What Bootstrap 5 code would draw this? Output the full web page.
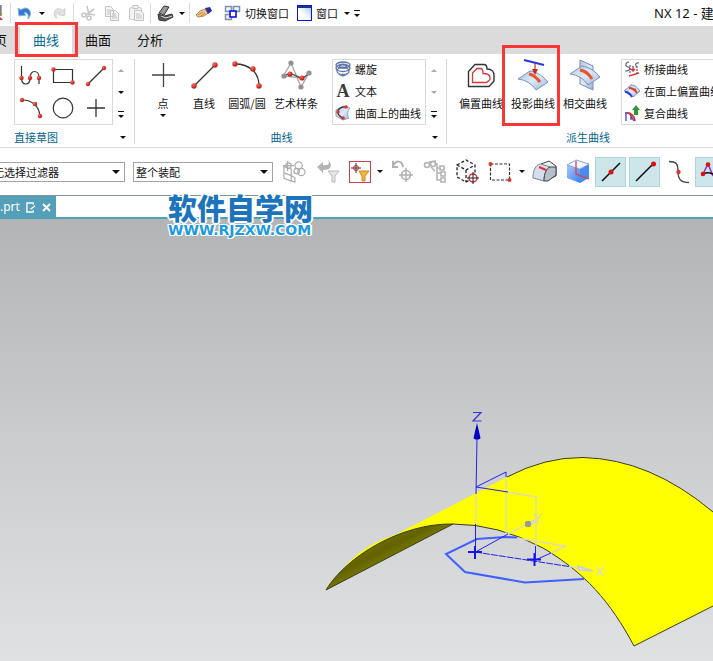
<!DOCTYPE html>
<html lang="zh-CN">
<head>
<meta charset="utf-8">
<meta name="viewport" content="width=device-width, initial-scale=1">
<title>NX 12 - 建模</title>
<link href="https://cdn.jsdelivr.net/npm/bootstrap@5.3.0/dist/css/bootstrap.min.css" rel="stylesheet">
<style>
body{font-family:"Noto Sans","Noto Sans CJK SC",sans-serif;font-size:11px;line-height:14px;color:#111;background:#fff}
.app{height:100vh;overflow:hidden}
button{background:none;border:0;padding:0;color:inherit;white-space:nowrap}
svg{display:block;flex:none;overflow:visible}
.cjk{font-family:"Noto Sans CJK SC",sans-serif}
.titlebar{height:26px}
.tool{width:24px;height:24px;display:flex;align-items:center;justify-content:center;flex:none}
.drop{width:10px;height:24px;display:flex;align-items:center;justify-content:center;flex:none}
.caret{display:block;width:0;height:0;border:3px solid transparent;border-top:3px solid #111;border-bottom:0}
.caret.up{border-top:0;border-bottom:3px solid #aaa}
.caret.dim{border-top-color:#aaa}
.caret.big{border-width:4px 4px 0}
.more{border-top:1px solid #111;padding-top:3px}
.vline{width:1px;height:20px;background:#ddd;margin:0 2px;flex:none}
.apptitle{font:13px/18px "Noto Sans","Noto Sans CJK SC",sans-serif;width:59px}
.tabbar{height:28px;background:#dbdbdb;font-size:13px;line-height:18px;padding-left:20px}
.tabbar button{width:52px;height:28px}
.tabbar button.first{width:20px;margin-left:-20px;text-align:left;overflow:hidden;direction:rtl;padding-right:13px}
.tabbar button.on{background:#fff;color:#006a92}
.ring{position:absolute;border:3px solid #fc3535;pointer-events:none;z-index:3}
.ring.r1{inset:-4px -6px -3px -5px}
.ring.r2{inset:-14px -1px -1px -5px}
.ribbon{height:94px;border-bottom:1px solid #d9d9d9;padding-top:5px}
.group{height:85px;border-right:1px solid #d9d9d9;flex:none}
.g1{width:135px;padding-left:14px}
.g2{width:312px;padding-left:8px}
.g3{width:282px;padding-left:8px;border:0}
.glabel{color:#00648a;height:14px}
.gshift{padding-right:12px}
.box{border:1px solid #d9d9d9;height:66px;flex:none}
.gallery{width:99px;display:grid;grid-template-columns:repeat(3,1fr);grid-template-rows:1fr 1fr}
.gallery button{display:flex;align-items:center;justify-content:center}
.scroll{width:16px;height:66px;flex:none}
.scroll button{height:22px;width:16px;display:flex;flex-direction:column;align-items:center;justify-content:center}
.big{height:66px;flex:none;position:relative;display:flex;flex-direction:column;align-items:center}
.big svg{margin-bottom:5px}
.w40{width:40px}.w42{width:42px}.w44{width:44px}.w54{width:54px}.w52{width:52px}
.listbox{width:94px;display:flex;flex-direction:column;justify-content:center}
.listbox.wide{width:150px;margin-left:10px}
.listbox button{height:22px;margin-top:-1px;margin-bottom:1px;display:flex;align-items:center;gap:4px;padding-left:2px;flex:none}
.selbar{height:47px}
.pick{position:relative;flex:none}
.pick select{appearance:none;-webkit-appearance:none;width:140px;height:20px;border:1px solid #a5a5a5;border-radius:0;background:#fff;padding:0 2px;font-size:11px;line-height:14px;color:#111;display:block}
.pick .caret{position:absolute;right:5px;top:8px;pointer-events:none}
.pick.cut{margin-left:-15px}
.pick.cut select{padding-left:7px}
.sb{width:34px;height:30px;display:flex;align-items:center;justify-content:center;flex:none}
.sb.narrow{width:32px}
.on2{width:31px;background:#cde6ea;border:1px solid #a9d5de;margin-right:3px}
.hot{width:22px;height:22px;border:1px solid #cf3f4a;display:flex;align-items:center;justify-content:center;flex:none}
.docrow{border-top:1px solid #7f9299;border-bottom:2px solid #4fa0b9;height:24px}
.doctab{background:#549fb9;color:#fff;width:56px;height:22px;font-size:12px;gap:6px}
.stage{background:linear-gradient(#b3b4b6,#cbccce 50%,#e0e1e3)}
.wm{position:absolute;left:168px;top:192px;z-index:4;pointer-events:none;white-space:nowrap;color:#1c75bc}
.wm .cn{font:900 29px/31px "Noto Sans CJK SC",sans-serif;text-shadow:1px 1px #fff,-1px -1px #fff,1px -1px #fff,-1px 1px #fff,2px 0 #fff,-2px 0 #fff,0 2px #fff}
.wm .en{font:bold 14px/14px "DejaVu Sans",sans-serif;color:#1b9be0;text-shadow:1px 1px #fff,-1px -1px #fff,1px -1px #fff,-1px 1px #fff,2px 0 #fff}
</style>
</head>
<body>
<svg width="0" height="0" class="position-absolute" aria-hidden="true"><defs>
<radialGradient id="rd" cx=".35" cy=".3"><stop offset="0" stop-color="#f0766c"/><stop offset="1" stop-color="#c8271e"/></radialGradient>
<linearGradient id="sf" x2="1" y2="1"><stop offset="0" stop-color="#a9c2e2"/><stop offset=".5" stop-color="#e0eaf6"/><stop offset="1" stop-color="#94b2da"/></linearGradient>
<linearGradient id="dk" x1="0" y1="0" x2="1" y2="1"><stop offset=".2" stop-color="#848400"/><stop offset=".42" stop-color="#626200"/><stop offset=".62" stop-color="#8e8e00"/></linearGradient>
<linearGradient id="bl" x2="1" y2="1"><stop offset="0" stop-color="#a5c8ff"/><stop offset="1" stop-color="#3f80ee"/></linearGradient>
<linearGradient id="wn" x1="1" y1="0" x2="0" y2="1"><stop offset="0" stop-color="#9cc4ee"/><stop offset=".6" stop-color="#fff"/></linearGradient>
</defs></svg>
<div class="app d-flex flex-column position-relative">
<header class="titlebar d-flex align-items-center cjk">
  <svg width="8" height="18" viewBox="0 0 8 18"><path d="M0 1h1v9H0z" fill="#8aa8dc"/><path d="M0 6l2 5-2 1z" fill="#f2a72e"/><path d="M0 13l3 3H0z" fill="#df2b2b"/><path d="M1 1v11" stroke="#555"/></svg>
  <span class="vline"></span>
  <button class="tool" aria-label="撤销"><svg width="16" height="16" viewBox="0 0 16 16"><path d="M1 3l1 8 7-1-2-2c3-1 5 1 4 6 4-4 3-10-2-11-2 0-4 1-5 2z" fill="#3878c7" stroke="#7eb2ec"/></svg></button>
  <button class="drop" aria-label="撤销列表"><span class="caret"></span></button>
  <button class="tool" aria-label="重做"><svg width="14" height="14" viewBox="0 0 16 16"><path d="M15 3l-1 8-7-1 2-2c-3-1-5 1-4 6-4-4-3-10 2-11 2 0 4 1 5 2z" fill="#e2e2e2" stroke="#c8c8c8"/></svg></button>
  <span class="vline"></span>
  <button class="tool" aria-label="剪切"><svg width="15" height="15" viewBox="0 0 15 15" fill="none" stroke="#c6c6c6" stroke-width="1.6"><path d="M6 0l2 9M13 3L5 9M8 8l6 1"/><circle cx="3" cy="9" r="2"/><circle cx="8" cy="12" r="2"/></svg></button>
  <button class="tool" aria-label="复制"><svg width="14" height="15" viewBox="0 0 14 15" fill="#f4f4f4" stroke="#c2c2c2"><path d="M.5 .5h5l3 3v7h-8zM5.500 4.500h5l3 3v7h-8zM2 4h3M2 6h3M2 8h3M7 8h4M7 10h5M7 12h5"/></svg></button>
  <button class="tool" aria-label="粘贴"><svg width="15" height="16" viewBox="0 0 15 16" fill="#f4f4f4" stroke="#c2c2c2"><rect x=".5" y="2.500" width="12" height="12" rx="2"/><path d="M4 .5h5v3H4zM5.500 5.500h6l3 3v7h-9zM7 9h4M7 11h6M7 13h6"/></svg></button>
  <span class="vline"></span>
  <button class="tool" aria-label="显示"><svg width="17" height="17" viewBox="0 0 17 17"><path d="M2 8L7 1l5 1-5 8z" fill="#999" stroke="#333"/><path d="M1 9l6 2 8-2 1 3-8 4-6-1z" fill="#555" stroke="#333"/><path d="M4 11l5 2 6-2" stroke="#ddd" fill="none"/></svg></button>
  <button class="drop" aria-label="显示列表"><span class="caret"></span></button>
  <span class="vline"></span>
  <button class="tool" aria-label="重复命令"><svg width="16" height="12" viewBox="0 0 16 12"><path d="M0 8l4-4 5-2 3 4-4 3-6 1z" fill="#f3c68c" stroke="#a96f32" stroke-width=".8"/><path d="M2 8l5-3M5 9l4-3" stroke="#a96f32" stroke-width=".8"/><path d="M9 1l5-1 2 4-4 3z" fill="#2a2f9c"/></svg></button>
  <button class="d-flex align-items-center gap-1 ms-2"><svg width="17" height="17" viewBox="0 0 17 17" fill="#eef2f6" stroke="#7e93a8"><path d="M1.500 1.500h6v5h-6zM9.500 1.500h6v5h-6zM1.500 9.500h6v5h-6z" stroke-width="1.500"/><rect x="6" y="6" width="6" height="6" fill="#fff" stroke="#0000f0" stroke-width="1.500"/></svg><span>切换窗口</span></button>
  <button class="d-flex align-items-center gap-1 ms-2"><svg width="15" height="16" viewBox="0 0 15 16"><rect x=".5" y=".5" width="14" height="15" fill="url(#wn)" stroke="#1010ee"/><path d="M1 1h13v2H1z" fill="#153c77"/></svg><span>窗口</span></button>
  <button class="drop ms-1" aria-label="窗口列表"><span class="caret"></span></button>
  <button class="drop" aria-label="更多"><span class="more"><span class="caret"></span></span></button>
  <div class="apptitle ms-auto text-nowrap overflow-hidden">NX 12 - 建模</div>
</header>

<nav class="tabbar d-flex cjk">
  <button class="first">主页</button>
  <button class="on position-relative">曲线<span class="ring r1"></span></button>
  <button>曲面</button>
  <button>分析</button>
</nav>

<section class="ribbon d-flex cjk">
  <div class="group g1 d-flex flex-column">
    <div class="d-flex">
      <div class="box gallery">
        <button aria-label="轮廓"><svg width="22" height="22" viewBox="0 0 22 22"><path d="M1.500 1v12c0 8 8.500 8 8.500 0 0-9 9-8 9-1v7" fill="none" stroke="#333" stroke-width="1.200"/><g fill="url(#rd)"><circle cx="1.500" cy="13" r="2.200"/><circle cx="10" cy="13" r="2.200"/><circle cx="19" cy="13" r="2.200"/></g></svg></button>
        <button aria-label="矩形"><svg width="22" height="18" viewBox="0 0 22 18"><path d="M1.500 2.500h19v13h-19z" fill="none" stroke="#333" stroke-width="1.200"/><g fill="url(#rd)"><circle cx="1.500" cy="2.500" r="2.200"/><circle cx="20.500" cy="15.500" r="2.200"/></g></svg></button>
        <button aria-label="直线"><svg width="20" height="20" viewBox="0 0 20 20"><path d="M2 18L18 2" stroke="#333" stroke-width="1.200"/><g fill="url(#rd)"><circle cx="2" cy="18" r="2.200"/><circle cx="18" cy="2" r="2.200"/></g></svg></button>
        <button aria-label="圆弧"><svg width="22" height="22" viewBox="0 0 22 22"><path d="M2 3c10 0 17 6 18 16" fill="none" stroke="#333" stroke-width="1.200"/><g fill="url(#rd)"><circle cx="2" cy="3" r="2.200"/><circle cx="15" cy="7" r="2.200"/><circle cx="20" cy="19" r="2.200"/></g></svg></button>
        <button aria-label="圆"><svg width="22" height="22" viewBox="0 0 22 22"><circle cx="11" cy="11" r="9.800" fill="none" stroke="#333" stroke-width="1.200"/></svg></button>
        <button aria-label="点"><svg width="18" height="18" viewBox="0 0 18 18"><path d="M9 0v18M0 9h18" stroke="#333" stroke-width="1.300"/></svg></button>
      </div>
      <div class="scroll"><button aria-label="向上"><span class="caret up"></span></button><button aria-label="向下"><span class="caret"></span></button><button aria-label="更多"><span class="more"><span class="caret"></span></span></button></div>
    </div>
    <div class="glabel d-flex align-items-center justify-content-between mt-auto pe-2"><span>直接草图</span><span class="caret"></span></div>
  </div>

  <div class="group g2 d-flex flex-column">
    <div class="d-flex">
      <button class="big w40"><svg width="32" height="32" viewBox="0 0 32 32"><path d="M16.500 4v24M5 16h23" stroke="#444" stroke-width="1.300"/></svg><span>点</span><span class="caret mt-1"></span></button>
      <button class="big w42"><svg width="32" height="32" viewBox="0 0 32 32"><path d="M6 27L27 6" stroke="#333" stroke-width="1.300"/><g fill="url(#rd)"><circle cx="6" cy="27" r="2.700"/><circle cx="27" cy="6" r="2.700"/></g></svg><span>直线</span></button>
      <button class="big w44"><svg width="32" height="32" viewBox="0 0 32 32"><path d="M4 5c14 0 24 8 24 22" fill="none" stroke="#333" stroke-width="1.300"/><g fill="url(#rd)"><circle cx="4" cy="5" r="2.700"/><circle cx="22" cy="10" r="2.700"/><circle cx="28" cy="27" r="2.700"/></g></svg><span>圆弧/圆</span></button>
      <button class="big w54"><svg width="32" height="32" viewBox="0 0 32 32"><path d="M4 16l7-12 10 24 8-14M4 17l18 2" fill="none" stroke="#aaa" stroke-width="1.400"/><path d="M4 17c8-5 10 0 17 2 4 0 6-3 8-5" fill="none" stroke="#555" stroke-width="1.400"/><g fill="#919191"><circle cx="4" cy="17" r="2.600"/><circle cx="11" cy="4" r="2.600"/><circle cx="21" cy="28" r="2.600"/><circle cx="29" cy="14" r="2.600"/></g><g fill="url(#rd)"><circle cx="10" cy="15" r="2.600"/><circle cx="22" cy="19" r="2.600"/></g></svg><span>艺术样条</span></button>
      <div class="box listbox ms-auto">
        <button><svg width="16" height="16" viewBox="0 0 16 16" fill="none" stroke="#5c74a8" stroke-width="1.300"><ellipse cx="8" cy="4" rx="7" ry="3" fill="#dfe7f5"/><ellipse cx="8" cy="7" rx="7" ry="3.500"/><ellipse cx="8" cy="10" rx="6" ry="3.500"/><ellipse cx="8" cy="5" rx="3.500" ry="1.500"/><path d="M4 13c2 3 7 2 9-1"/></svg>螺旋</button>
        <button><svg width="16" height="16" viewBox="0 0 16 16" aria-hidden="true"><text x="8" y="14" text-anchor="middle" font-family="Liberation Serif,serif" font-weight="bold" font-size="18" fill="#3c3c3c">A</text></svg>文本</button>
        <button><svg width="16" height="16" viewBox="0 0 16 16"><path d="M1 5l7-4 7 2c-3 3-3 8-1 10l-6 2-7-4z" fill="url(#sf)" stroke="#86a2cc"/><path d="M11 2c-5-1-9 3-8 6 0 3 3 3 5 6" fill="none" stroke="#333" stroke-width="1.300"/><g fill="#df352a"><circle cx="11" cy="2" r="1.800"/><circle cx="3" cy="7" r="1.800"/><circle cx="8" cy="13" r="1.800"/></g></svg>曲面上的曲线</button>
      </div>
      <div class="scroll me-1"><button aria-label="向上"><span class="caret up"></span></button><button aria-label="向下"><span class="caret dim"></span></button><button aria-label="更多"><span class="more"><span class="caret"></span></span></button></div>
    </div>
    <div class="glabel d-flex align-items-center mt-auto pe-2"><span class="flex-fill text-center gshift">曲线</span><span class="caret"></span></div>
  </div>

  <div class="group g3 d-flex flex-column">
    <div class="d-flex">
      <button class="big w52"><svg width="32" height="32" viewBox="0 0 32 32" fill="none"><path d="M3.500 27.500V12.500L10 5.500h9q3 0 3 4.500c6 0 7 3 7 7v5l-5 5.500z" stroke="#333" stroke-width="1.400"/><path d="M7.500 23.500V14l4.500-4.500h3.500q2.500 0 2.500 5c5 0 7 2 7 4v2l-3.500 3z" stroke="#d93636" stroke-width="1.300"/></svg><span>偏置曲线</span></button>
      <button class="big w52"><svg width="32" height="32" viewBox="0 0 32 32"><path d="M1 20l12-8c7 1 13 5 18 11l-12 8c-4-6-10-10-18-11z" fill="url(#sf)" stroke="#7890b4"/><path d="M12 15c5 1 8 4 11 8" fill="none" stroke="#e4552c" stroke-width="3"/><path d="M7 1l20 5" stroke="#2a35e8" stroke-width="2"/><path d="M18 4v7" stroke="#c8271e" stroke-width="1.200"/><path d="M15 10h6l-3 6z" fill="#c8271e"/></svg><span>投影曲线</span><span class="ring r2"></span></button>
      <button class="big w52"><svg width="32" height="32" viewBox="0 0 32 32"><path d="M11 1l13 6v24l-13-6z" fill="url(#sf)" stroke="#7890b4"/><path d="M1 15l12-8c7 1 13 5 18 11l-12 8c-4-6-10-10-18-11z" fill="url(#sf)" fill-opacity=".9" stroke="#7890b4"/><path d="M11 11c6 1 9 4 12 9" fill="none" stroke="#e4552c" stroke-width="3"/></svg><span>相交曲线</span></button>
      <div class="box listbox wide">
        <button><svg width="16" height="16" viewBox="0 0 16 16" fill="none"><path d="M5 1C1 1 1 6 4 6s3 4-3 4M15 2c-4-1-4 3-2 4" stroke="#666" stroke-width="1.200"/><path d="M6 4v8M13 5v8" stroke="#33c" stroke-dasharray="2 1"/><path d="M5 15l10-3M9 5v5M7 8l2 2 2-2" stroke="#dc3c30" stroke-width="1.500"/></svg>桥接曲线</button>
        <button><svg width="16" height="14" viewBox="0 0 16 14"><path d="M0 7l7-6c4 0 7 3 9 6l-7 6c-2-4-5-6-9-6z" fill="url(#sf)" stroke="#7890b4"/><path d="M1 8c3 0 5 2 7 5" fill="none" stroke="#33e" stroke-width="1.800"/><path d="M5 4c4 0 6 2 8 5M9 6l3-1" fill="none" stroke="#dc3c30" stroke-width="1.800"/></svg>在面上偏置曲线</button>
        <button><svg width="16" height="16" viewBox="0 0 16 16" fill="none"><path d="M2 7v9M1 8h4l5 8M7 9v6" stroke="#33c" stroke-width="1.200"/><path d="M3 8c5 0 7 3 8 8" stroke="#dc3c30" stroke-width="1.800"/><path d="M12 0l4 5h-2v5h-4V5H8z" fill="#2b9b3a"/></svg>复合曲线</button>
      </div>
    </div>
    <div class="glabel d-flex align-items-center mt-auto pe-2"><span class="flex-fill text-center">派生曲线</span></div>
  </div>
</section>

<section class="selbar d-flex align-items-center cjk">
  <div class="pick cut"><select aria-label="选择过滤器"><option>无选择过滤器</option></select><span class="caret big"></span></div>
  <div class="pick ms-2"><select aria-label="选择范围"><option>整个装配</option></select><span class="caret big"></span></div>
  <button class="sb ms-1" aria-label="组件链接"><svg width="24" height="22" viewBox="0 0 26 24" fill="none" stroke="#adadad" stroke-width="1.300"><path d="M2 6l8 3v13l-8-3zM2 13l8 3M10 16l4 2v5l-4-1M6 0v11M1 5h12"/><circle cx="7" cy="5" r="3"/><circle cx="18" cy="5" r="4"/><circle cx="21" cy="12" r="4"/><circle cx="16" cy="11" r="3"/></svg></button>
  <button class="sb" aria-label="重置过滤器"><svg width="24" height="24" viewBox="0 0 24 24"><path d="M1 7l6-5v3c6 1 7-2 5-5 6 5 2 11-5 10v3z" fill="#b5b5b5"/><path d="M12 11h11l-4 5v6h-3v-6z" fill="#e5e5e5" stroke="#bbb"/></svg></button>
  <button class="hot ms-1" aria-label="常规选择过滤器"><svg width="20" height="20" viewBox="0 0 20 20"><path d="M6 1v10M1 6h10" stroke="#333"/><circle cx="6" cy="6" r="2.500" fill="none" stroke="#c8271e"/><path d="M9 9h10l-4 5v5h-3v-5z" fill="#f5b638" stroke="#c88a1c"/></svg></button>
  <button class="drop ms-1" aria-label="过滤器列表"><span class="caret"></span></button>
  <button class="sb" aria-label="定位"><svg width="23" height="23" viewBox="0 0 23 23" fill="none" stroke="#b0b0b0" stroke-width="1.500"><path d="M2 6c3-6 9-6 10 1M2 1v6h5" stroke-width="2"/><circle cx="15" cy="15" r="4.500"/><path d="M15 8v14M8 15h14"/></svg></button>
  <button class="sb narrow" aria-label="装配导航"><svg width="24" height="24" viewBox="0 0 24 24" fill="none" stroke="#b4b4b4" stroke-width="1.600"><circle cx="4" cy="5" r="2.500"/><circle cx="10" cy="4" r="2.500"/><path d="M6 2l7-1M14 3v17h4M14 13h4M14 8h4M8 7l4 4"/><path d="M17 6h4v4h-4zM18 12h4v4h-4zM18 18h4v4h-4z"/></svg></button>
  <button class="sb narrow" aria-label="小平面体"><svg width="24" height="24" viewBox="0 0 24 24" fill="none"><path d="M2 5l9-5 9 5v12l-9 5-9-5zM2 5l9 5 9-5M11 10v12" stroke="#222" stroke-width="1.300" stroke-dasharray="3 2"/><circle cx="18" cy="18" r="4" fill="#fff" stroke="#d32a2a" stroke-width="1.400"/><path d="M18 12v12M12 18h12" stroke="#222"/></svg></button>
  <button class="sb" aria-label="矩形选择"><svg width="22" height="20" viewBox="0 0 22 20"><path d="M1.500 2h19v16h-19z" fill="none" stroke="#333" stroke-width="1.200" stroke-dasharray="3 1.500"/><circle cx="1.500" cy="2" r="2" fill="#df352a"/><circle cx="20.500" cy="18" r="2" fill="#df352a"/></svg></button>
  <button class="drop" aria-label="选择方式"><span class="caret"></span></button>
  <button class="sb" aria-label="着色"><svg width="25" height="22" viewBox="0 0 25 22"><path d="M9 3l8-3 7 5v10l-9 4z" fill="#f0f0f0" stroke="#444"/><path d="M1 14C2 7 5 3 9 3l9 3c-4 2-6 7-6 14L1 17z" fill="#d5deee" stroke="#7a8498"/><path d="M12 20c0-8 3-13 6-14l6 0v8l-8 6z" fill="#b9bfca" stroke="#444"/><path d="M7 6l7 3" stroke="#ee2b2b" stroke-width="2"/></svg></button>
  <button class="sb" aria-label="透视"><svg width="24" height="24" viewBox="0 0 24 24"><path d="M1 5l13 4v14L1 18z" fill="url(#bl)"/><path d="M14 9l9-5v14l-9 5z" fill="#4a8af0"/><path d="M1 5l9-5 13 4-9 5z" fill="#f2f6ff" stroke="#8aa6d8"/><path d="M10 1v13l13 5" fill="none" stroke="#dc4040" stroke-width="1.300"/></svg></button>
  <button class="sb on2" aria-label="中点"><svg width="20" height="20" viewBox="0 0 20 20"><path d="M1 19L19 1" stroke="#111" stroke-width="1.600"/><circle cx="10" cy="10" r="2.500" fill="#d11"/></svg></button>
  <button class="sb on2" aria-label="端点"><svg width="20" height="20" viewBox="0 0 20 20"><path d="M1 19L18 2" stroke="#111" stroke-width="1.600"/><circle cx="18.500" cy="2" r="2.500" fill="#d11"/></svg></button>
  <button class="sb narrow" aria-label="拐点"><svg width="20" height="22" viewBox="0 0 20 22"><path d="M0 .5c7 0 9 2 9 10s3 11 11 11" fill="none" stroke="#444" stroke-width="1.300"/><circle cx="9.500" cy="11" r="2.200" fill="#df352a"/></svg></button>
  <button class="sb on2" aria-label="极点"><svg width="20" height="20" viewBox="0 0 20 20" fill="none"><path d="M2 12l5-10 5 12" stroke="#93c" stroke-width="1.600"/><path d="M2 12c6-3 10 0 14 2" stroke="#111" stroke-width="1.500"/><circle cx="2" cy="12" r="2.300" fill="#d11"/><circle cx="7" cy="2.500" r="2.300" fill="#d11"/></svg></button>
</section>

<div class="docrow flex-shrink-0 d-flex">
  <button class="doctab d-flex align-items-center"><span>.prt</span><svg width="10" height="11" viewBox="0 0 11 12" fill="none" stroke="#fff" stroke-width="1.500"><path d="M8 3V1H1v10h7V9M5 8l5-4"/></svg><svg width="9" height="9" viewBox="0 0 9 9"><path d="M1 1l7 7M8 1L1 8" stroke="#fff" stroke-width="2"/></svg></button>
</div>

<main class="stage flex-fill overflow-hidden d-flex">
<svg class="w-100 h-100" viewBox="0 219 713 442" preserveAspectRatio="xMidYMid slice" role="img" aria-label="曲面模型">
  <path d="M326 590Q345 563 362 551Q376 541 397 534L507 477Q545 457 583 457.500Q650 459 713 512V606L634 646C610 601 585 573 543 548Q498 524 453 524C400 523 345 558 326 590z" fill="#ff0"/>
  <path d="M326 590C345 558 400 523 453 524z" fill="url(#dk)"/>
  <path d="M507 477Q545 457 583 457.500Q650 459 713 512M326 590C345 558 400 523 453 524Q498 524 543 548C585 573 610 601 634 646L713 606M326 590L453 524" fill="none" stroke="#3c3c20" stroke-width="1"/>
  <path d="M517 537.500L505 537 477 539 446 554 465 572 525 582.500 584 579" fill="none" stroke="#4060ff" stroke-width="2"/>
  <g fill="none" stroke="#d9d9c4" stroke-width="1.400"><path d="M476 494V524M506 477V535L525 525M508 492L536 497V546M517 538L565 546 551 553M569 566L580 569"/></g>
  <g fill="none" stroke="#2222e6" stroke-width="1"><path d="M477 438L476 494M475.500 524V552L508 534M476 487L506 472V477M476 487L508 492M535.500 546V560L551 553"/><path d="M475 552L569 566.500" stroke-dasharray="7 1"/></g>
  <path d="M468 552h14M475 546v13M527 559.500h14M534.500 553v13" stroke="#1414f0" stroke-width="2"/>
  <path d="M477 423l3.500 15c-1 2-6 2-7 0z" fill="#0000c4"/>
  <path d="M473 412.500h8l-8 8.500h8.500" fill="none" stroke="#3434ee" stroke-width="1.200"/>
  <path d="M527 523l8-4 1 3-6 4z" fill="#d8d8cc"/><circle cx="528" cy="524" r="3.200" fill="#999"/>
  <path d="M534 514l4 5 4-6M538 519l-1 5" fill="none" stroke="#d9d9b0" stroke-width="1.300"/>
  <path d="M578 566l15 5-14-1z" fill="#ddd" stroke="#cfcfc8" stroke-width="1.500"/>
  <path d="M596 567l8 9M604 567l-8 9" stroke="#dedec4" stroke-width="1.300"/>
</svg>
</main>

<div class="wm"><div class="cn">软件自学网</div><div class="en">WWW.RJZXW.COM</div></div>
</div>
<script src="https://cdn.jsdelivr.net/npm/bootstrap@5.3.0/dist/js/bootstrap.bundle.min.js"></script>
</body>
</html>
